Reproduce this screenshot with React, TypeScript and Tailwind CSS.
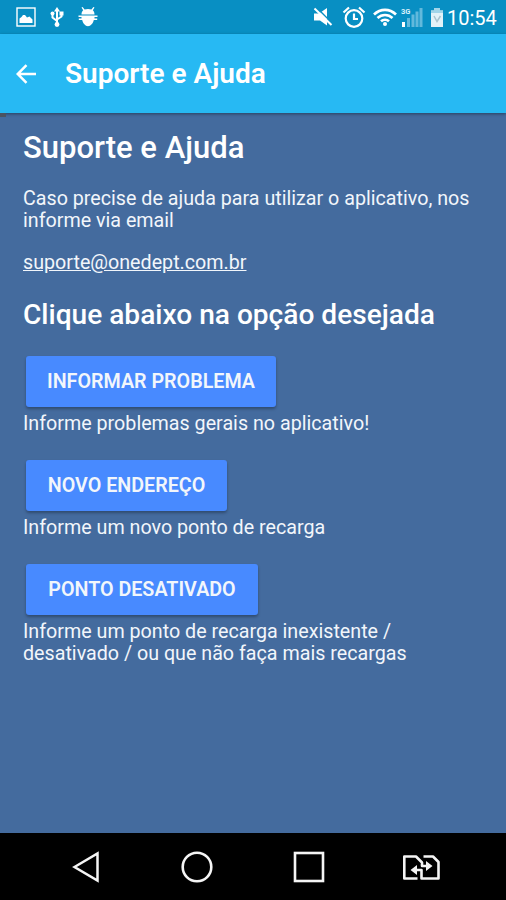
import type { ReactNode } from 'react'

interface Option {
  label: string
  description: ReactNode
  width: string
}

const options: Option[] = [
  {
    label: 'INFORMAR PROBLEMA',
    description: 'Informe problemas gerais no aplicativo!',
    width: 'w-[250px]',
  },
  {
    label: 'NOVO ENDEREÇO',
    description: 'Informe um novo ponto de recarga',
    width: 'w-[201px]',
  },
  {
    label: 'PONTO DESATIVADO',
    description: (
      <>
        Informe um ponto de recarga inexistente /<br />
        desativado / ou que não faça mais recargas
      </>
    ),
    width: 'w-[232px]',
  },
]

function StatusBar() {
  return (
    <div className="flex h-[34px] shrink-0 items-center bg-[#088fc3] pr-[9px] pl-4 text-white">
      <svg viewBox="0 0 20 20" className="size-5" fill="none" aria-hidden="true">
        <rect x="1" y="1" width="18" height="18" stroke="currentColor" strokeWidth="1.4" />
        <path d="M3.5 16v-4.5l2-1.5 1.5-2h2l2 2.5 2.5-1 3 3V16z" fill="currentColor" />
      </svg>
      <svg viewBox="0 0 14 20" className="ml-[14px] h-5 w-[14px]" fill="none" stroke="currentColor" strokeWidth="2" aria-hidden="true">
        <path d="M7 3v14M2.5 7v3.5L7 14M11.5 6v3.5L7 12.5" />
        <path d="M7 0l3 4.5H4z" fill="currentColor" stroke="none" />
        <circle cx="2.5" cy="6.5" r="2" fill="currentColor" stroke="none" />
        <rect x="9.5" y="4.5" width="4" height="4" fill="currentColor" stroke="none" />
        <circle cx="7" cy="17.5" r="2.4" fill="currentColor" stroke="none" />
      </svg>
      <svg viewBox="0 0 20 20" className="ml-[14px] size-5" fill="currentColor" aria-hidden="true">
        <path d="M3.5 7.5c0-2 .7-3.300 1.700-4.200L3.500.5l1.100-.5 2 2.500c2-.8 4.800-.8 6.800 0l2-2.500 1.100.5-1.700 2.800c1 .9 1.700 2.200 1.700 4.200z" />
        <path d="M.5 8.500h19v1.600h-3v1.500h2.700v1.500h-3.400c-.8 3.500-3 6.100-5.800 6.100s-5-2.600-5.800-6.100H.8v-1.500h2.700v-1.500h-3z" />
      </svg>

      <svg viewBox="0 0 20 20" className="ml-auto size-5" fill="currentColor" aria-hidden="true">
        <path d="M1 6.5h5L14 1v17.500l-7-5H1z" />
        <path d="M3.500.5L20 17" stroke="#088fc3" strokeWidth="1.5" />
        <path d="M1.500 1.500l17 16.500" stroke="currentColor" strokeWidth="2" />
      </svg>
      <svg viewBox="0 0 24 22" className="ml-[9px] h-[22px] w-6" fill="none" stroke="currentColor" strokeWidth="2.2" aria-hidden="true">
        <circle cx="12" cy="12.5" r="8.300" />
        <path d="M12 7.5V13h4M1.500 6.500L7 1.500M17 1.500l5.500 5" />
      </svg>
      <svg viewBox="0 0 24 18" className="ml-[7px] h-[18px] w-6" fill="none" stroke="currentColor" strokeWidth="2.7" aria-hidden="true">
        <path d="M1 6.500C7.500.3 16.500.3 23 6.500M4.500 10c4.300-4 10.700-4 15 0M8 13.300c2.300-2 5.700-2 8 0" />
        <circle cx="12" cy="16" r="2" fill="currentColor" stroke="none" />
      </svg>
      <svg viewBox="0 0 22 22" className="ml-[4px] h-[22px] w-[22px]" aria-hidden="true">
        <text x="0" y="7.5" fill="#d9f1fb" fontSize="7.5" fontWeight="700" fontFamily="Roboto, sans-serif">3G</text>
        <path d="M1 16h3v5H1z" fill="#fff" />
        <path d="M6 12h3v9H6zM10.500 8.500h3V21h-3zM14.500 5.500h3V21h-3zM18.500 2h3v19h-3z" fill="#62b9dc" />
      </svg>
      <svg viewBox="0 0 14 22" className="ml-[7px] h-[22px] w-[14px]" aria-hidden="true">
        <path d="M4 2h6v2.500h3V21H1V4.500h3z" fill="#e3f2f8" />
        <path d="M4 2h6v2.500h3V7H1V4.500h3z" fill="#a2d5e9" />
        <path d="M4 10l3 5.500 3.500-5.500" fill="none" stroke="#a9c4cf" strokeWidth="1.5" />
      </svg>
      <span className="mt-[2px] ml-[3px] w-[50px] text-[20px] leading-none whitespace-nowrap">10:54</span>
    </div>
  )
}

function NavigationBar() {
  return (
    <nav className="flex h-[67px] shrink-0 items-center bg-black pl-[71px] text-[#f5f5f5]">
      <svg viewBox="0 0 30 34" className="h-[34px] w-[30px]" fill="none" stroke="currentColor" strokeWidth="2.5" aria-hidden="true">
        <path d="M3.500 17L26.500 3.500v27z" />
      </svg>
      <svg viewBox="0 0 34 34" className="ml-[79px] size-[34px]" fill="none" stroke="currentColor" strokeWidth="2.6" aria-hidden="true">
        <circle cx="17" cy="17" r="14.3" />
      </svg>
      <svg viewBox="0 0 34 34" className="ml-[78px] size-[34px]" fill="none" stroke="currentColor" strokeWidth="2.6" aria-hidden="true">
        <rect x="3" y="3" width="28" height="28" />
      </svg>
      <svg viewBox="0 0 40 28" className="ml-[75px] h-[28px] w-10" fill="none" stroke="currentColor" strokeWidth="2.6" strokeLinejoin="round" aria-hidden="true">
        <path d="M16.500 25.500H3.300V3.500H15l6 6v3.500h6M22.500 3.500H32l5.500 5.500v16.500H20.500V17h-7" />
        <path d="M25 8l6.500 5-6.500 5zM16 12l-6.500 5 6.500 5z" fill="currentColor" stroke="none" />
      </svg>
    </nav>
  )
}

export default function App() {
  return (
    <div className="flex h-[900px] w-[506px] flex-col overflow-hidden bg-[#446b9e] font-[Roboto,sans-serif] text-white">
      <StatusBar />
      <header className="relative flex h-[79px] shrink-0 items-center bg-[#27b9f3] pl-4 shadow-[0_1px_3px_rgba(0,0,0,0.4)]">
        <button type="button" aria-label="Voltar">
          <svg viewBox="0 0 20 20" className="size-5" fill="none" stroke="currentColor" strokeWidth="2.5" aria-hidden="true">
            <path d="M20 10H2M10.500 1.200L1.700 10l8.800 8.800" />
          </svg>
        </button>
        <div className="ml-[29px] text-[28px] leading-8 font-semibold">Suporte e Ajuda</div>
        <span className="absolute top-full left-0 h-1 w-1.5 bg-[#4b5361]" />
      </header>

      <main className="flex-1 px-[23px] pt-[17px] text-[19.7px] leading-[22px] text-[#f2f6fb]">
        <h1 className="text-[31px] leading-9 font-medium text-white">Suporte e Ajuda</h1>
        <p className="mt-[22px] whitespace-nowrap">
          Caso precise de ajuda para utilizar o aplicativo, nos<br />
          informe via email
        </p>
        <p className="mt-5">
          <a href="mailto:suporte@onedept.com.br" className="underline">suporte@onedept.com.br</a>
        </p>
        <h2 className="mt-[25px] text-[28.1px] leading-8 font-medium whitespace-nowrap text-white">
          Clique abaixo na opção desejada
        </h2>
        <div className="mt-[25px] flex flex-col gap-[25px]">
          {options.map((option) => (
            <section key={option.label}>
              <button
                type="button"
                className={`${option.width} ml-[3px] flex h-[51px] items-center justify-center rounded-[3px] bg-[#488aff] text-[19.7px] font-semibold whitespace-nowrap shadow-[0_2px_3px_rgba(0,0,0,0.3)]`}
              >
                {option.label}
              </button>
              <p className="mt-[6px] whitespace-nowrap">{option.description}</p>
            </section>
          ))}
        </div>
      </main>
      <NavigationBar />
    </div>
  )
}
